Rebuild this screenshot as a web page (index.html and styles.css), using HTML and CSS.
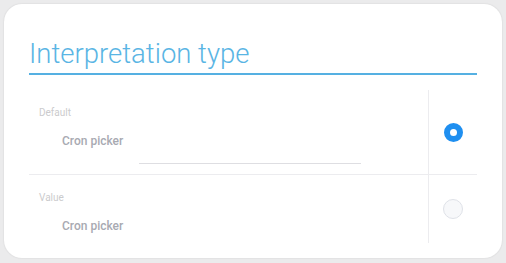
FILE: index.html
```html
<!DOCTYPE html>
<html>
<head>
<meta charset="utf-8">
<link rel="stylesheet" href="styles.css">
</head>
<body>
<div class="card">
  <h1 class="title">Interpretation type</h1>
  <div class="table">
    <div class="row">
      <div class="cell-main">
        <div class="label">Default</div>
        <div class="line">
          <span class="name">Cron picker</span>
          <div class="input"></div>
        </div>
      </div>
      <div class="cell-radio"><span class="radio checked"></span></div>
    </div>
    <div class="row last">
      <div class="cell-main">
        <div class="label">Value</div>
        <div class="line">
          <span class="name">Cron picker</span>
        </div>
      </div>
      <div class="cell-radio"><span class="radio"></span></div>
    </div>
  </div>
</div>
</body>
</html>
```
FILE: styles.css
```css
html, body {
  margin: 0;
  padding: 0;
  background: #ebebec;
  font-family: Roboto, "Liberation Sans", sans-serif;
}
body {
  padding: 4px;
  width: 506px;
  height: 263px;
  box-sizing: border-box;
}
.card {
  width: 498px;
  height: 254px;
  box-sizing: border-box;
  background: #ffffff;
  border-radius: 18px;
  box-shadow: 0 0 2px rgba(0, 0, 0, 0.12);
  padding: 35px 25px 0 25px;
}
.title {
  margin: 0;
  font-size: 27.5px;
  line-height: 30px;
  font-weight: 300;
  color: #5ab5e4;
  padding-bottom: 4px;
  border-bottom: 2px solid #55b0e2;
}
.table {
  margin-top: 15px;
}
.row {
  display: flex;
  border-bottom: 1px solid #ececef;
}
.row.last {
  border-bottom: none;
}
.cell-main {
  flex: 1;
  padding: 17px 10px 10px 10px;
  display: flex;
  flex-direction: column;
  gap: 15px;
}
.cell-radio {
  width: 48px;
  border-left: 1px solid #ececef;
  display: flex;
  align-items: center;
  justify-content: center;
}
.label {
  font-size: 10px;
  line-height: 12px;
  color: #cbcbcd;
}
.line {
  display: flex;
  align-items: flex-start;
  padding-left: 23px;
}
.name {
  font-size: 12px;
  line-height: 14px;
  font-weight: 500;
  color: #a8aab2;
  width: 77px;
}
.input {
  width: 222px;
  height: 29px;
  border-bottom: 1px solid #dedee2;
}
.radio {
  width: 20px;
  height: 20px;
  box-sizing: border-box;
  border-radius: 50%;
  border: 1.5px solid #dfe2e8;
  background: #f7f8fa;
}
.radio.checked {
  width: 19px;
  height: 19px;
  border: 6px solid #1f8ff0;
  background: #ffffff;
}
```
